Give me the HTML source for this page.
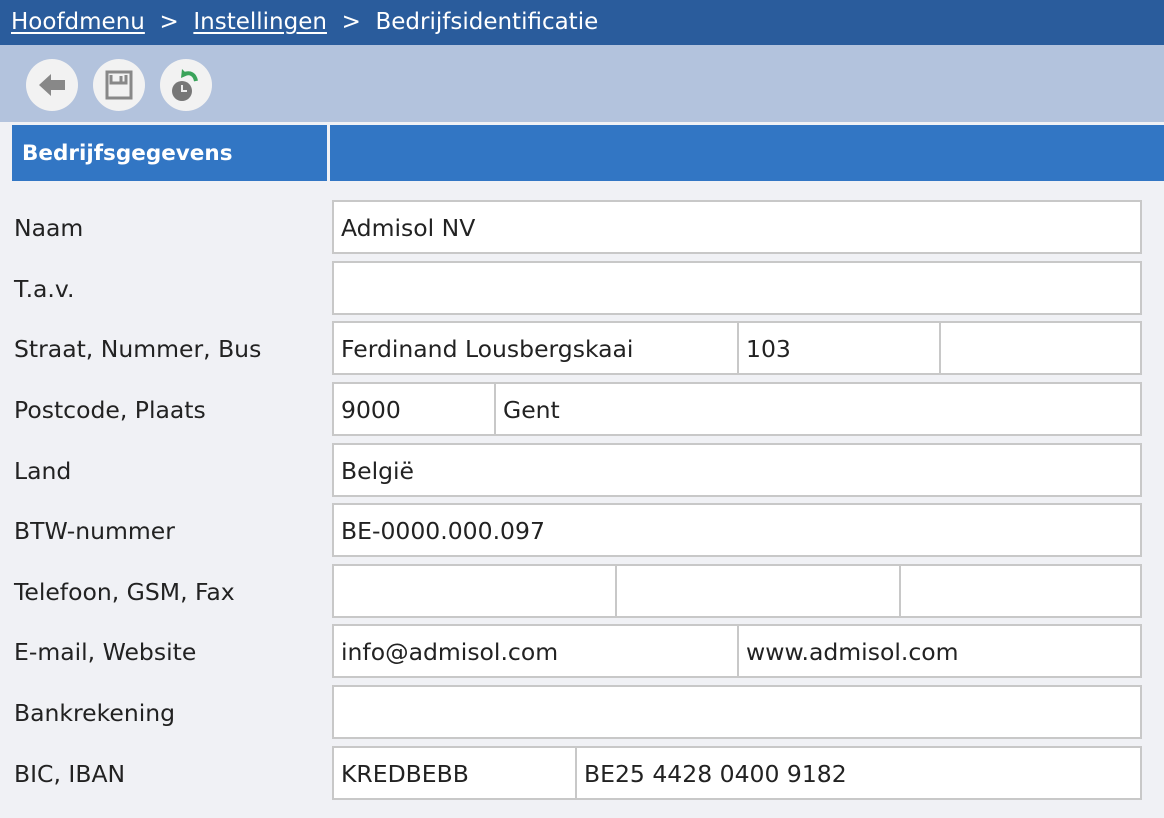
<!DOCTYPE html>
<html><head><meta charset="utf-8"><style>
*{box-sizing:border-box;margin:0;padding:0}
body{width:1164px;height:818px;background:#f0f1f5;font-family:"DejaVu Sans",sans-serif;position:relative;overflow:hidden}
.hdr{position:absolute;left:0;top:0;width:1164px;height:45px;background:#2a5c9c;color:#fff;font-size:23px;line-height:44px;padding-left:11px;white-space:pre}
.hdr u{text-underline-offset:3px}
.tb{position:absolute;left:0;top:45px;width:1164px;height:77px;background:#b3c3dd}
.ic{position:absolute;top:14px;width:52px;height:52px;border-radius:50%;background:#f2f2f2}
.sec{position:absolute;top:125px;height:56px;background:#3276c4;color:#fff;font-weight:bold;font-size:21.5px;line-height:58px}
.lbl{position:absolute;left:14px;font-size:23.5px;color:#222;margin-top:0px}
.f{position:absolute;height:54px;background:#fff;border:2px solid #c8c8c8;font-size:23.5px;line-height:52px;padding-left:7px;color:#222;white-space:nowrap}
</style></head><body>
<div class="hdr"><u>Hoofdmenu</u>  &gt;  <u>Instellingen</u>  &gt;  Bedrijfsidentificatie</div>
<div class="tb">
 <div class="ic" style="left:26px"><svg width="52" height="52"><path d="M13 26 L25 15 L25 21 L39 21 L39 31 L25 31 L25 37 Z" fill="#888"/></svg></div>
 <div class="ic" style="left:93px"><svg width="52" height="52"><path d="M14 13 H38 V39 H14 Z M18 16 V24 H33 V16 M28 17 V23" fill="none" stroke="#888" stroke-width="3"/></svg></div>
 <div class="ic" style="left:160px"><svg width="52" height="52"><circle cx="22" cy="32" r="10" fill="#777"/><path d="M22 26 V32 H27" stroke="#eee" stroke-width="2" fill="none"/><path d="M24 15 Q34 12 36 22" stroke="#3aa35a" stroke-width="4" fill="none"/><path d="M22 10 L28 16 L21 19 Z" fill="#3aa35a"/></svg></div>
</div>
<div class="sec" style="left:12px;width:315px;padding-left:10px">Bedrijfsgegevens</div>
<div class="sec" style="left:330px;width:834px"></div>

<div class="lbl" style="top:214px">Naam</div>
<div class="f" style="left:332px;top:200px;width:810px">Admisol NV</div>
<div class="lbl" style="top:275px">T.a.v.</div>
<div class="f" style="left:332px;top:261px;width:810px"></div>
<div class="lbl" style="top:335px">Straat, Nummer, Bus</div>
<div class="f" style="left:332px;top:321px;width:407px">Ferdinand Lousbergskaai</div>
<div class="f" style="left:737px;top:321px;width:204px">103</div>
<div class="f" style="left:939px;top:321px;width:203px"></div>
<div class="lbl" style="top:396px">Postcode, Plaats</div>
<div class="f" style="left:332px;top:382px;width:164px">9000</div>
<div class="f" style="left:494px;top:382px;width:648px">Gent</div>
<div class="lbl" style="top:457px">Land</div>
<div class="f" style="left:332px;top:443px;width:810px">België</div>
<div class="lbl" style="top:517px">BTW-nummer</div>
<div class="f" style="left:332px;top:503px;width:810px">BE-0000.000.097</div>
<div class="lbl" style="top:578px">Telefoon, GSM, Fax</div>
<div class="f" style="left:332px;top:564px;width:285px"></div>
<div class="f" style="left:615px;top:564px;width:286px"></div>
<div class="f" style="left:899px;top:564px;width:243px"></div>
<div class="lbl" style="top:638px">E-mail, Website</div>
<div class="f" style="left:332px;top:624px;width:407px">info@admisol.com</div>
<div class="f" style="left:737px;top:624px;width:405px">www.admisol.com</div>
<div class="lbl" style="top:699px">Bankrekening</div>
<div class="f" style="left:332px;top:685px;width:810px"></div>
<div class="lbl" style="top:760px">BIC, IBAN</div>
<div class="f" style="left:332px;top:746px;width:245px">KREDBEBB</div>
<div class="f" style="left:575px;top:746px;width:567px">BE25 4428 0400 9182</div>
</body></html>
